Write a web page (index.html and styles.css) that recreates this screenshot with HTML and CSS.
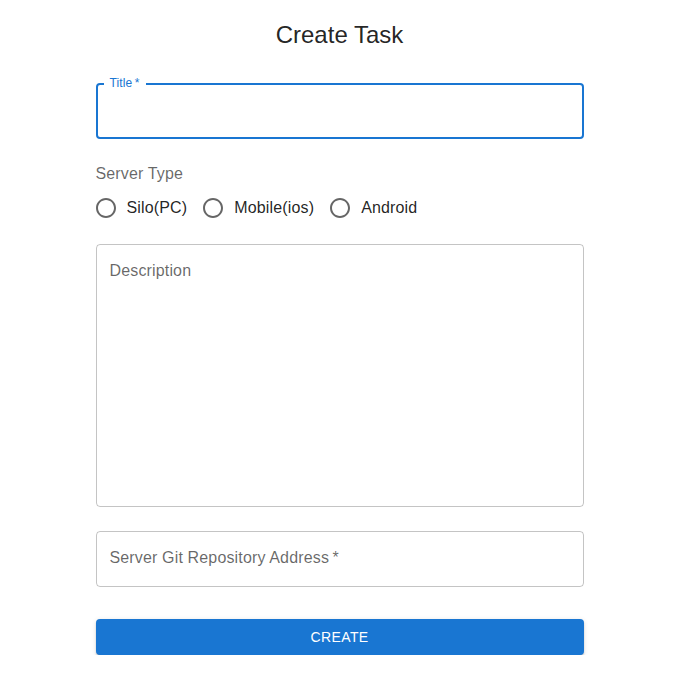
FILE: index.html
```html
<!DOCTYPE html>
<html>
<head>
<meta charset="utf-8">
<link rel="stylesheet" href="styles.css">
</head>
<body>
<main class="page">
  <h1 class="heading">Create Task</h1>
  <form class="form">
    <div class="field field-focused">
      <span class="float-label">Title&thinsp;*</span>
    </div>
    <div class="group">
      <div class="group-label">Server Type</div>
      <div class="radios">
        <label class="radio"><span class="radio-icon"><svg viewBox="0 0 24 24" width="24" height="24"><path d="M12 2C6.48 2 2 6.48 2 12s4.48 10 10 10 10-4.48 10-10S17.52 2 12 2zm0 18c-4.42 0-8-3.58-8-8s3.58-8 8-8 8 3.58 8 8-3.58 8-8 8z" fill="rgba(0,0,0,0.6)"/></svg></span><span class="radio-text">Silo(PC)</span></label>
        <label class="radio"><span class="radio-icon"><svg viewBox="0 0 24 24" width="24" height="24"><path d="M12 2C6.48 2 2 6.48 2 12s4.48 10 10 10 10-4.48 10-10S17.52 2 12 2zm0 18c-4.42 0-8-3.58-8-8s3.58-8 8-8 8 3.58 8 8-3.58 8-8 8z" fill="rgba(0,0,0,0.6)"/></svg></span><span class="radio-text">Mobile(ios)</span></label>
        <label class="radio"><span class="radio-icon"><svg viewBox="0 0 24 24" width="24" height="24"><path d="M12 2C6.48 2 2 6.48 2 12s4.48 10 10 10 10-4.48 10-10S17.52 2 12 2zm0 18c-4.42 0-8-3.58-8-8s3.58-8 8-8 8 3.58 8 8-3.58 8-8 8z" fill="rgba(0,0,0,0.6)"/></svg></span><span class="radio-text">Android</span></label>
      </div>
    </div>
    <div class="field field-area">
      <span class="placeholder">Description</span>
    </div>
    <div class="field field-git">
      <span class="placeholder">Server Git Repository Address&thinsp;*</span>
    </div>
    <button type="button" class="btn">CREATE</button>
  </form>
</main>
</body>
</html>
```

FILE: styles.css
```css
html, body {
  margin: 0;
  padding: 0;
  background: #fff;
}
body {
  font-family: "Liberation Sans", Arial, Helvetica, sans-serif;
  color: rgba(0,0,0,0.87);
}
.page {
  width: 488px;
  margin: 0 auto;
  padding-top: 19px;
}
.heading {
  margin: 0;
  font-size: 24px;
  font-weight: 400;
  line-height: 32px;
  text-align: center;
  color: rgba(0,0,0,0.87);
}
.form {
  display: flex;
  flex-direction: column;
  margin-top: 32px;
}
.field {
  position: relative;
  box-sizing: border-box;
  height: 56px;
  border: 1px solid rgba(0,0,0,0.23);
  border-radius: 4px;
}
.field-focused {
  border: 2px solid #1976d2;
}
.float-label {
  position: absolute;
  left: 6px;
  top: -10px;
  padding: 0 6px 0 6px;
  background: #fff;
  font-size: 12px;
  line-height: 16px;
  letter-spacing: 0.1px;
  color: #1976d2;
}
.group {
  margin-top: 23px;
  display: flex;
  flex-direction: column;
}
.group-label {
  font-size: 16px;
  line-height: 24px;
  letter-spacing: 0.15px;
  color: rgba(0,0,0,0.6);
}
.radios {
  display: flex;
  flex-direction: row;
  margin-top: 1px;
}
.radio {
  display: flex;
  align-items: center;
  margin-left: -11px;
  margin-right: 16px;
  cursor: pointer;
}
.radio-icon {
  display: flex;
  padding: 9px;
}
.radio-icon svg {
  display: block;
}
.radio-text {
  font-size: 16px;
  line-height: 24px;
  letter-spacing: 0.15px;
  color: rgba(0,0,0,0.87);
}
.field-area {
  margin-top: 15px;
  height: 263px;
}
.field-git {
  margin-top: 24px;
}
.placeholder {
  position: absolute;
  left: 13px;
  top: 14px;
  font-size: 16px;
  line-height: 24px;
  letter-spacing: 0.15px;
  color: rgba(0,0,0,0.6);
}
.btn {
  margin-top: 32px;
  height: 36px;
  border: none;
  border-radius: 4px;
  background: #1976d2;
  color: #fff;
  font-family: "Liberation Sans", Arial, Helvetica, sans-serif;
  font-size: 14px;
  letter-spacing: 0.4px;
  font-weight: 400;
  box-shadow: 0 3px 1px -2px rgba(0,0,0,0.2), 0 2px 2px 0 rgba(0,0,0,0.14), 0 1px 5px 0 rgba(0,0,0,0.12);
  cursor: pointer;
}
```
